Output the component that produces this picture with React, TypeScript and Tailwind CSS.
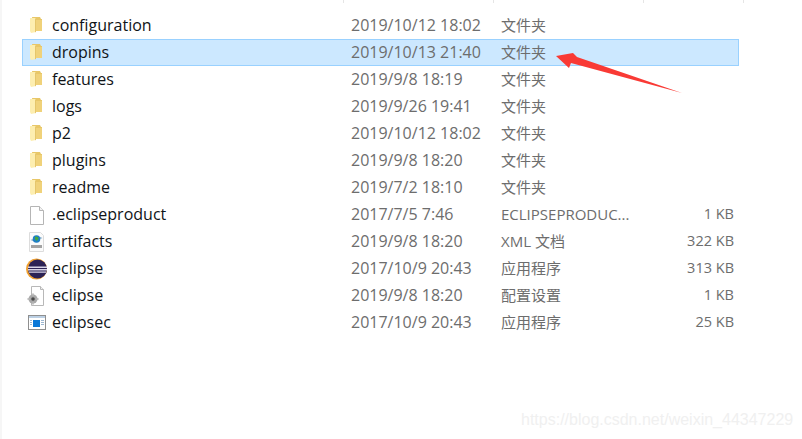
const rows = [
  { name: "configuration", date: "2019/10/12 18:02", type: "文件夹", size: "", icon: "folder" },
  { name: "dropins", date: "2019/10/13 21:40", type: "文件夹", size: "", icon: "folder", selected: true },
  { name: "features", date: "2019/9/8 18:19", type: "文件夹", size: "", icon: "folder" },
  { name: "logs", date: "2019/9/26 19:41", type: "文件夹", size: "", icon: "folder" },
  { name: "p2", date: "2019/10/12 18:02", type: "文件夹", size: "", icon: "folder" },
  { name: "plugins", date: "2019/9/8 18:20", type: "文件夹", size: "", icon: "folder" },
  { name: "readme", date: "2019/7/2 18:10", type: "文件夹", size: "", icon: "folder" },
  { name: ".eclipseproduct", date: "2017/7/5 7:46", type: "ECLIPSEPRODUC...", size: "1 KB", icon: "file" },
  { name: "artifacts", date: "2019/9/8 18:20", type: "XML 文档", size: "322 KB", icon: "xml" },
  { name: "eclipse", date: "2017/10/9 20:43", type: "应用程序", size: "313 KB", icon: "eclipse" },
  { name: "eclipse", date: "2019/9/8 18:20", type: "配置设置", size: "1 KB", icon: "config" },
  { name: "eclipsec", date: "2017/10/9 20:43", type: "应用程序", size: "25 KB", icon: "exe" },
];

function FileIcon({ icon }: { icon: string }) {
  if (icon === "folder") {
    return (
      <svg width="20" height="20" viewBox="0 0 20 20">
        <path d="M5 1h8l1 2h1v12H7z" fill="#e8c768" />
        <path d="M9 4h6v11H9z" fill="#f0d27a" />
        <path d="M3 2h5l1 1v13l-5 1-1-2z" fill="#fdeeb0" />
        <path d="M8 2.500l1 .5v13l-1 .2z" fill="#e5c66c" />
      </svg>
    );
  }
  if (icon === "file") {
    return (
      <svg width="20" height="20" viewBox="0 0 20 20">
        <path d="M3.500 1.500h9l4 4v14h-13z" fill="#fff" stroke="#b5b5b5" />
        <path d="M12.500 1.500v4h4" fill="#f2f2f2" stroke="#b5b5b5" />
      </svg>
    );
  }
  if (icon === "xml") {
    return (
      <svg width="20" height="20" viewBox="0 0 20 20">
        <path d="M2.500 0.500h11l3 3v16h-14z" fill="#fbfbfb" stroke="#dcdcdc" />
        <circle cx="9.500" cy="7" r="3.800" fill="#1f7fc4" />
        <path d="M8 4.500l3 .5 .5 2-2 2-1.500-2z" fill="#45a83c" />
        <path d="M3.500 8l2.500-1v2z M15.500 6l-2.500 1v-2z" fill="#7aa7c9" />
        <path d="M4 13h11v3H4z" fill="#a3a3a3" />
      </svg>
    );
  }
  if (icon === "eclipse") {
    return (
      <svg width="22" height="22" viewBox="0 0 22 22">
        <circle cx="10.500" cy="11" r="10.500" fill="#f0a030" />
        <circle cx="11.500" cy="11" r="9.500" fill="#2c2255" />
        <path d="M2 8.500h19v1.400H2z M2 11h19v1.400H2z M3 13.500h17v1.200H3z" fill="#d8d4e6" />
      </svg>
    );
  }
  if (icon === "config") {
    return (
      <svg width="20" height="20" viewBox="0 0 20 20">
        <path d="M4.500 0.500h9l3 3v16h-12z" fill="#fff" stroke="#b8b8b8" />
        <path d="M13.500 0.500v3h3" fill="#eee" stroke="#b8b8b8" />
        <circle cx="6" cy="13" r="4.500" fill="#a9a9a9" />
        <circle cx="6" cy="13" r="1.800" fill="#4a4a4a" />
        <path d="M5 7.500h2v2H5z M5 16.500h2v2H5z M0.500 12h2v2h-2z M9.500 12h2v2h-2z" fill="#bdbdbd" />
      </svg>
    );
  }
  return (
    <svg width="20" height="20" viewBox="0 0 20 20">
      <rect x="1.500" y="2.500" width="17" height="14" fill="#fff" stroke="#8f8f8f" />
      <path d="M2 3h16v2H2z" fill="#bcd0e4" />
      <path d="M6 7h7v7H6z" fill="#0a78d7" />
      <path d="M3 7h2v1H3z M3 9h2v1H3z M3 11h2v1H3z M14 7h3v1h-3z M14 9h3v1h-3z M14 11h3v1h-3z" fill="#9db7d1" />
    </svg>
  );
}

export default function App() {
  return (
    <div className="relative w-[802px] h-[439px] overflow-hidden bg-white border-l-2 border-[#f6f6f6] font-['Open_Sans','Noto_Sans_CJK_SC',sans-serif] text-[16px]">
      <div className="flex h-[3px] ml-[341px]">
        <div className="w-[150px] border-l border-[#e5e5e5]" />
        <div className="w-[150px] border-l border-[#e5e5e5]" />
        <div className="w-[100px] border-l border-[#e5e5e5]" />
        <div className="border-l border-[#e5e5e5]" />
      </div>
      <div className="flex flex-col ml-[20px] mt-[9px] w-[717px]">
        {rows.map((row, i) => (
          <div
            key={i}
            className={`grid grid-cols-[29px_299px_150px_144px_89px] items-center h-[27px] border ${
              row.selected ? "bg-[#cce8ff] border-[#99d1ff]" : "border-transparent"
            }`}
          >
            <div className="flex items-center justify-center pr-px">
              <FileIcon icon={row.icon} />
            </div>
            <span className="pb-0.5 text-[#101418] whitespace-nowrap">{row.name}</span>
            <span className="pb-0.5 text-[#6d6d6d] whitespace-nowrap">{row.date}</span>
            <span className="pb-0.5 text-[#6d6d6d] text-[15px] whitespace-nowrap">{row.type}</span>
            <span className="pb-0.5 text-[#6d6d6d] text-[14.5px] text-right whitespace-nowrap">{row.size}</span>
          </div>
        ))}
      </div>
      <svg className="absolute left-[-2px] top-0" width="802" height="439" viewBox="0 0 802 439">
        <path d="M556 56L573 53 577 57 682 93 571 63 569 68z" fill="#f93a35" />
      </svg>
      <span className="absolute left-[519px] top-[411px] text-[16px] leading-[18px] text-[#f0f0f0] font-['Liberation_Sans',sans-serif] whitespace-nowrap">
        https://blog.csdn.net/weixin_44347229
      </span>
    </div>
  );
}
